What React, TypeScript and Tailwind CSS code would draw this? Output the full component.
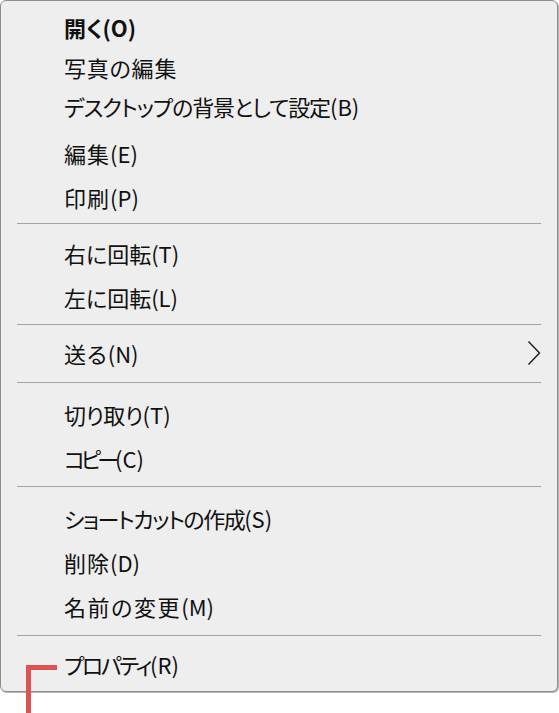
import React from 'react';

type Row =
  | { kind: 'item'; jp: string; key?: string; fit: string; h: number; mt?: number; bold?: boolean; sub?: boolean }
  | { kind: 'sep'; top: number; bottom: number };

// `fit` nudges the Japanese run so its width matches the Yu Gothic UI original
const rows: Row[] = [
  { kind: 'item', jp: '開く', key: '(O)', fit: 'tracking-[0px]', h: 40, bold: true },
  { kind: 'item', jp: '写真の編集', fit: 'tracking-[0.8px]', h: 40 },
  { kind: 'item', jp: 'デスクトップの背景として設定', key: '(B)', fit: 'tracking-[-1.1px]', h: 38 },
  { kind: 'item', jp: '編集', key: '(E)', fit: 'tracking-[1px]', h: 44, mt: 6 },
  { kind: 'item', jp: '印刷', key: '(P)', fit: 'tracking-[1px]', h: 44 },
  { kind: 'sep', top: 2, bottom: 9 },
  { kind: 'item', jp: '右に回転', key: '(T)', fit: 'tracking-[0px]', h: 44 },
  { kind: 'item', jp: '左に回転', key: '(L)', fit: 'tracking-[0px]', h: 44 },
  { kind: 'sep', top: 3, bottom: 8 },
  { kind: 'item', jp: '送る', key: '(N)', fit: 'tracking-[1px]', h: 44, sub: true },
  { kind: 'sep', top: 5, bottom: 11 },
  { kind: 'item', jp: '切り取り', key: '(T)', fit: 'tracking-[-0.5px]', h: 44 },
  { kind: 'item', jp: 'コピー', key: '(C)', fit: 'tracking-[-4px]', h: 44 },
  { kind: 'sep', top: 4, bottom: 11 },
  { kind: 'item', jp: 'ショートカットの作成', key: '(S)', fit: 'tracking-[-1.5px]', h: 44 },
  { kind: 'item', jp: '削除', key: '(D)', fit: 'tracking-[1px]', h: 44 },
  { kind: 'item', jp: '名前の変更', key: '(M)', fit: 'tracking-[1.6px]', h: 44 },
  { kind: 'sep', top: 5, bottom: 8 },
  { kind: 'item', jp: 'プロパティ', key: '(R)', fit: 'tracking-[-2.4px]', h: 44 },
];

function Chevron() {
  return (
    <svg width="14" height="26" viewBox="0 0 14 26" fill="none" className="mr-[16px]">
      <path d="M1.5 1.5 L12.5 13 L1.5 24.5" stroke="#1a1a1a" strokeWidth="1.4" />
    </svg>
  );
}

export default function App() {
  return (
    <div
      className="relative w-[559px] h-[713px] bg-white overflow-hidden"
      style={{ fontFamily: '"Noto Sans CJK JP", "Noto Sans", sans-serif', fontFeatureSettings: '"palt"' }}
    >
      <div className="w-[558px] h-[692px] bg-[#eeeeee] border border-[#8c8c8c] rounded-[6px] shadow-[1px_1px_0_#b4b4b4] pt-[8px] flex flex-col">
        {rows.map((r, i) =>
          r.kind === 'sep' ? (
            <div key={i} className="px-[16px]" style={{ paddingTop: r.top, paddingBottom: r.bottom }}>
              <div className="h-px bg-[#a3a3a3]" />
            </div>
          ) : (
            <div
              key={i}
              className={`flex items-center justify-between pl-[63px] pb-[4px] text-[22px] leading-none text-[#111111] ${r.bold ? 'font-bold' : 'font-normal'}`}
              style={{ height: r.h, marginTop: r.mt ?? 0 }}
            >
              <span className="whitespace-nowrap">
                <span className={r.fit}>{r.jp}</span>
                {r.key}
              </span>
              {r.sub && <Chevron />}
            </div>
          )
        )}
      </div>
      {/* red callout marker */}
      <div className="absolute left-[26px] top-[665px] w-[31px] h-[5px] bg-[#dd5353]" />
      <div className="absolute left-[26px] top-[665px] w-[5px] h-[48px] bg-[#dd5353]" />
    </div>
  );
}
